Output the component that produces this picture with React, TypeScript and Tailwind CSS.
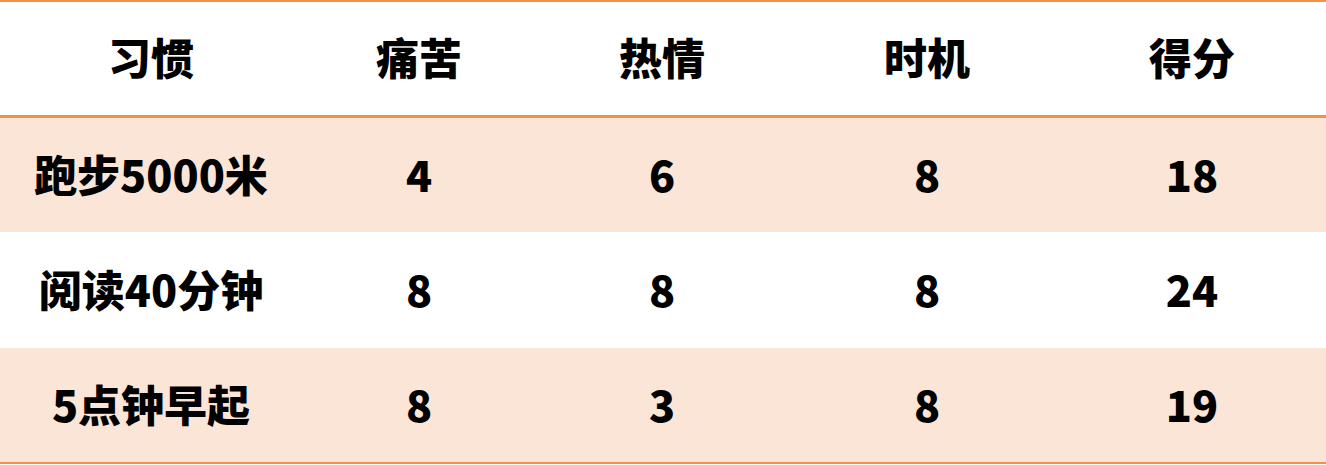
import React from "react";

const header = ["习惯", "痛苦", "热情", "时机", "得分"];
const rows = [
  ["跑步5000米", "4", "6", "8", "18"],
  ["阅读40分钟", "8", "8", "8", "24"],
  ["5点钟早起", "8", "3", "8", "19"],
];

const cols = "grid grid-cols-[302px_234px_252px_278px_260px]";

export default function App() {
  return (
    <div
      className="w-[1326px] h-[465px] bg-white text-black font-black text-[43px]"
      style={{ fontFamily: '"Noto Sans CJK SC", "Noto Sans", sans-serif' }}
    >
      <div className="border-t-2 border-b-2 border-[#f39148]">
        {/* header */}
        <div className={`${cols} h-[116px] items-center pb-1 border-b-[3px] border-[#f39148]`}>
          {header.map((h, j) => (
            <div key={h} className={`text-center ${j === 4 ? "pr-2" : ""}`}>
              {h}
            </div>
          ))}
        </div>
        {rows.map((r, i) => (
          <div
            key={r[0]}
            className={`${cols} ${i === 1 ? "h-[116px] bg-white" : "h-[114px] bg-[#fbe5d6]"} items-center pb-1`}
          >
            {r.map((c, j) => (
              <div key={j} className={`text-center ${j === 4 ? "pr-2" : ""}`}>
                {c}
              </div>
            ))}
          </div>
        ))}
      </div>
    </div>
  );
}
